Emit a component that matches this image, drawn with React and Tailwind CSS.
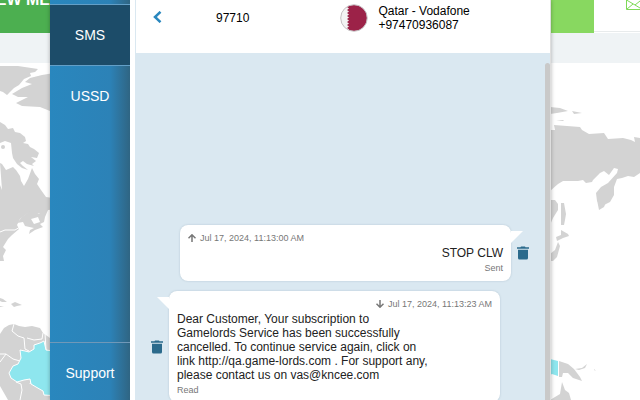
import React from "react";

function WorldMap() {
  return (
    <svg className="block w-full" viewBox="0 63 640 337" aria-hidden="true">
      <g fill="#d3d3d3">
        <path d="M0 66 L18 66 L38 69 L35 72 L30 73 L31 76 L24 79 L19 85 L14 88 L10 92 L7 95 L3 92 L0 91Z" />
        <path d="M60 72 L42 75 L30 78 L25 82 L32 84 L22 88 L12 94 L18 97 L28 97 L16 103 L22 106 L40 107 L50 111 L60 112Z" />
        <path d="M0 122 L5 125 L8 129 L13 128 L15 132 L20 133 L25 137 L26 141 L23 143 L28 144 L30 147 L34 149 L39 153 L37 158 L31 157 L36 161 L32 164 L34 166 L27 164 L23 161 L20 163 L23 166 L28 170 L22 168 L17 164 L13 158 L12 153 L11 143 L5 141 L0 143Z" />
        <path d="M0 163 L2 164 L6 170 L13 167 L16 170 L20 176 L21 181 L24 186 L28 179 L32 168 L35 174 L39 179 L37 184 L41 190 L46 197 L60 199 L60 209 L48 210 L44 214 L34 213 L28 213 L20 219 L17 225 L19 229 L12 235 L8 239 L3 247 L6 250 L3 256 L4 261 L0 261 L0 185 L2 190Z" />
        <path d="M30 211 L36 212 L39 214 L42 211 L48 210 L45 217 L44 222 L40 224 L43 227 L35 230 L29 234 L30 230 L34 228 L25 226 L23 222 L17 223 L22 217Z" />
        <path d="M0 298 L3 299 L7 302 L2 302 L0 301Z M11 304 L15 302 L22 305 L17 306 L14 307Z M0 306 L4 307 L0 307Z" />
        <path d="M0 334 L4 328 L9 325 L14 324 L19 326 L25 327 L32 326 L40 328 L43 333 L50 338 L60 340 L60 400 L8 400 L4 393 L0 386Z" />
        <path d="M550 107 L560 108 L568 111 L557 113 L550 114Z M572 111 L582 113 L574 114Z M556 120 L564 120 L563 121Z" />
        <path d="M550 130 L555 130 L554 125 L580 127 L582 130 L589 134 L604 133 L608 139 L623 138 L631 140 L635 142 L634 137 L640 138 L640 173 L634 177 L628 176 L622 178 L617 179 L614 187 L614 195 L610 202 L602 206 L597 201 L596 193 L601 187 L608 183 L617 173 L618 169 L614 168 L609 175 L604 171 L600 173 L593 180 L592 182 L586 183 L583 180 L578 181 L563 181 L558 184 L550 191Z" />
        <path d="M597 200 L607 200 L604 207 L599 210Z M550 200 L555 200 L558 204 L558 210 L553 218 L550 225Z M561 203 L564 203 L566 214 L565 220 L564 225 L561 225 L561 212Z M561 230 L568 234 L569 236 L563 238 L557 241 L556 237 L561 235Z M558 242 L560 246 L557 257 L553 261 L550 261 L550 254 L555 250Z" />
        <path d="M559 361 L568 364 L574 369 L580 377 L582 381 L573 378 L568 373 L563 373 L562 377 L559 377Z M575 369 L582 368 L587 364 L585 368 L579 370Z M562 382 L565 390 L569 393 L571 400 L550 400 L560 394Z M594 369 L596 371 L594 370Z" />
      </g>
      <g fill="#fff">
        <path d="M0 143 L7 143 L11 148 L9 152 L0 154Z" />
        <path d="M31 219 L38 217 L40 222 L34 224Z" />
      </g>
      <circle cx="3" cy="147" r="2" fill="#d3d3d3" />
      <g fill="none" stroke="#fff" strokeWidth="1">
        <path d="M14 324 L12 331 L18 336 L24 338 L25 349 L29 351" />
        <path d="M43 333 L42 339 L34 340 L27 338 M45 333 L46 350" />
        <path d="M0 354 L6 354 L13 359 L20 361 M0 362 L6 354" />
        <path d="M16 382 L21 384 L22 390 L20 400 M31 381 L30 384" />
        <path d="M0 232 L5 230 L15 230 L20 227" />
      </g>
      <path d="M20 350 L25 351 L29 352 L34 349 L34 345 L40 343 L44 341 L46 350 L60 352 L60 396 L44 395 L43 391 L36 387 L31 384 L30 379 L24 380 L17 382 L11 378 L9 373 L13 366 L18 364 L21 358Z" fill="#8ee6ee" stroke="#fff" />
      <path d="M550 359 L558 361 L558 376 L552 374 L550 375Z" fill="#8ee6ee" />
    </svg>
  );
}

function Backdrop() {
  return (
    <div className="bg-white">
      <header className="flex h-[33px] bg-white">
        <div className="flex h-full w-[50px] justify-end bg-[#4caf50]">
          <p className="-mt-3 text-base font-bold whitespace-nowrap text-white">NEW ME</p>
        </div>
        <div className="h-full w-[544px] bg-[#88d860]" />
        <div className="flex h-8 flex-1 justify-end border-b border-[#e8ebec]">
          <svg className="h-[10px] w-[14px]" viewBox="0 0 14 10" fill="none" stroke="#7ed957" aria-hidden="true">
            <path d="M.5 0 V9.5 H14 M.5 0 L9 5 L14 1 M1 9 L7 4 M9 5 L14 8" />
          </svg>
        </div>
      </header>
      <div className="h-[30px] bg-[#eff3f5]" />
      <WorldMap />
    </div>
  );
}

function Sidebar() {
  return (
    <nav className="flex w-20 shrink-0 flex-col bg-linear-to-r from-[#2987be] via-[#2c82b7] via-75% to-[#2f6583] text-sm text-white">
      <div className="h-1" />
      <a href="#sms" className="flex h-[62px] items-center justify-center border-y border-[#639fc7] bg-[#1c4c69]">
        SMS
      </a>
      <a href="#ussd" className="flex h-[60px] items-center justify-center">
        USSD
      </a>
      <a href="#support" className="mt-auto flex h-[58px] items-center justify-center border-t border-[#7098b8] pt-0.5">
        Support
      </a>
    </nav>
  );
}

function QatarFlag() {
  return (
    <svg className="size-7 shrink-0" viewBox="0 0 28 28" role="img" aria-label="Qatar">
      <defs>
        <clipPath id="flag">
          <circle cx="14" cy="14" r="13" />
        </clipPath>
      </defs>
      <g clipPath="url(#flag)">
        <rect width="28" height="28" fill="#f3f3f3" />
        <path d="M7 0 L9 1.500 L7 3 L9 4.500 L7 6 L9 7.500 L7 9 L9 10.500 L7 12 L9 13.500 L7 15 L9 16.500 L7 18 L9 19.500 L7 21 L9 22.500 L7 24 L9 25.500 L7 28 H28 V0Z" fill="#9c2248" />
      </g>
      <circle cx="14" cy="14" r="13.300" fill="none" stroke="#c4bec1" />
    </svg>
  );
}

function Trash() {
  return (
    <button type="button" aria-label="Delete message" className="block text-[#2b6a8c]">
      <svg className="block h-[14px] w-3" viewBox="0 0 12 14" fill="currentColor" aria-hidden="true">
        <path d="M4 0.500 H8 L8.500 1.300 H12 V2.800 H0 V1.300 H3.500Z M1 3.800 H11 V12 Q11 13.500 9.500 13.500 H2.500 Q1 13.500 1 12Z" />
      </svg>
    </button>
  );
}

function Arrow({ down }) {
  return (
    <svg className="size-2" viewBox="0 0 8 8" fill="none" stroke="#777" strokeWidth="1.500" aria-hidden="true">
      <path d={down ? "M4 0 V7 M.5 3.800 L4 7.200 L7.500 3.800" : "M4 8 V1 M.5 4.200 L4 .8 L7.500 4.200"} />
    </svg>
  );
}

function Stamp({ down, children }) {
  return (
    <div className={"flex items-center gap-1 text-[9px] leading-3 text-[#777]" + (down ? " justify-end" : "")}>
      <Arrow down={down} />
      <time>{children}</time>
    </div>
  );
}

function Chat() {
  return (
    <main className="flex min-h-0 flex-1 bg-[#dae8f1]">
      <div className="min-w-0 flex-1 overflow-hidden pt-[172px]">
        <article className="flex items-center pr-4 pl-11">
          <div className="relative h-14 flex-1 rounded-lg bg-white px-2 pt-[7px] shadow-[0_0_2px_rgba(80,110,130,0.3)]">
            <Stamp>Jul 17, 2024, 11:13:00 AM</Stamp>
            <p className="mt-[2px] text-right text-xs leading-[14px] text-[#222]">STOP CLW</p>
            <p className="text-right text-[9px] leading-4 text-[#777]">Sent</p>
            <svg className="absolute top-[6px] -right-3 h-3 w-3" viewBox="0 0 12 12" aria-hidden="true">
              <path d="M0 0 H12 L0 12Z" fill="#fff" />
            </svg>
          </div>
          <div className="ml-[6px]">
            <Trash />
          </div>
        </article>
        <article className="mt-[10px] flex items-center pr-[45px] pl-[15px]">
          <div className="mr-[6px]">
            <Trash />
          </div>
          <div className="relative flex-1 rounded-lg bg-white px-2 pt-[7px] pb-1 shadow-[0_0_2px_rgba(80,110,130,0.3)]">
            <Stamp down>Jul 17, 2024, 11:13:23 AM</Stamp>
            <p className="mt-[2px] max-w-[252px] text-xs leading-[14px] text-[#222]">
              Dear Customer, Your subscription to Gamelords Service has been successfully cancelled. To
              continue service again, click on link http://qa.game-lords.com . For support any, please
              contact us on vas@kncee.com
            </p>
            <p className="text-[9px] leading-4 text-[#777]">Read</p>
            <svg className="absolute top-[6px] -left-3 h-3 w-3" viewBox="0 0 12 12" aria-hidden="true">
              <path d="M12 0 H0 L12 12Z" fill="#fff" />
            </svg>
          </div>
        </article>
      </div>
      <div className="mt-[10px] w-[5px] shrink-0 rounded-t bg-[#c9c9c9]" />
    </main>
  );
}

export default function App() {
  return (
    <div className="relative h-screen overflow-hidden bg-white font-['Liberation_Sans',Arial,sans-serif]">
      <Backdrop />
      <div className="absolute inset-0 mr-[89px] ml-[50px] flex border-r border-[#dedede] bg-white shadow-[0_0_4px_rgba(0,0,0,0.3)]">
        <Sidebar />
        <section className="ml-[5px] flex min-w-0 flex-1 flex-col border-l border-[#dae8f1]">
          <header className="flex h-[53px] shrink-0 items-start pt-1 text-xs leading-[14px] text-black">
            <button type="button" aria-label="Back" className="mt-[7px] ml-4 text-[#2987be]">
              <svg className="block size-3" viewBox="0 0 12 12" fill="none" stroke="currentColor" strokeWidth="2.500" aria-hidden="true">
                <path d="M8.500 .8 L3 6 L8.500 11.200" />
              </svg>
            </button>
            <p className="mt-[7px] ml-[52px]">97710</p>
            <div className="ml-[91px] flex items-center gap-[10px]">
              <QatarFlag />
              <p>
                Qatar - Vodafone
                <br />
                +97470936087
              </p>
            </div>
          </header>
          <Chat />
        </section>
      </div>
    </div>
  );
}
